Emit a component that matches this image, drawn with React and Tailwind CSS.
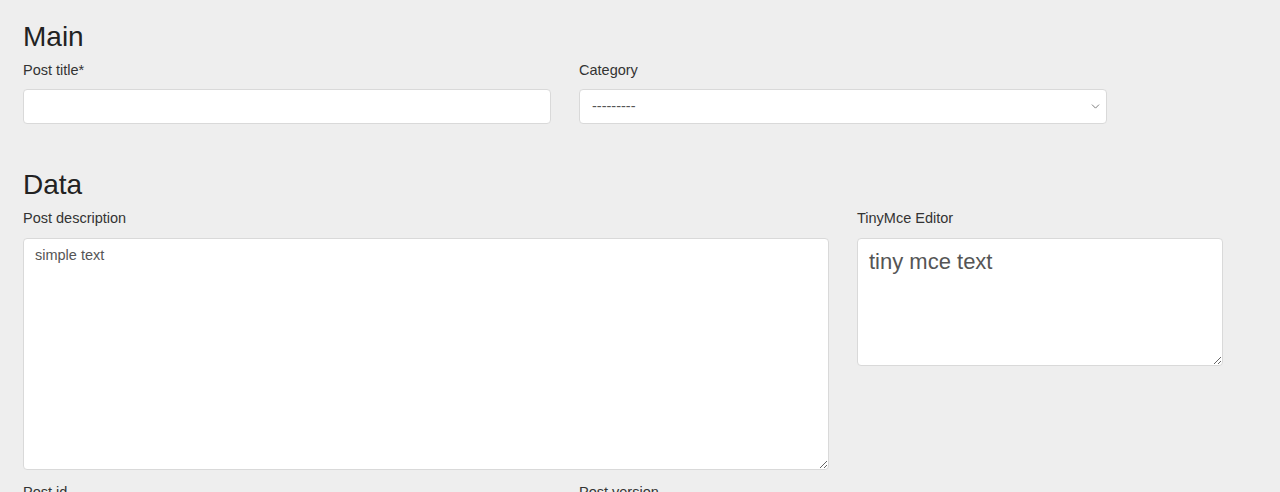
import React from "react";
import { ChevronDown } from "lucide-react";

const labelCls = "block text-[14.5px] leading-[1.5] text-[#333] mb-2";
const fieldCls =
    "block w-full bg-white border border-[#d9d9d9] rounded-[4px] px-3 text-[14.5px] leading-[1.5] text-[#555] outline-none";

const App = () => {
    return (
        <div
            className="min-h-screen bg-[#eeeeee] pl-[23px] pt-5 pb-10"
            style={{ fontFamily: '"Liberation Sans", Arial, sans-serif' }}
        >
            <form>
                {/* Main */}
                <h3 className="text-[28px] leading-[1.2] text-[#222] mb-[6px]">Main</h3>
                <div className="flex gap-[28px]">
                    <div className="w-[528px]">
                        <label className={labelCls}>Post title*</label>
                        <input type="text" className={fieldCls + " h-[35px]"} />
                    </div>
                    <div className="w-[528px]">
                        <label className={labelCls}>Category</label>
                        <div className="relative">
                            <select className={fieldCls + " h-[35px] appearance-none"} defaultValue="">
                                <option value="">---------</option>
                            </select>
                            <ChevronDown
                                size={13}
                                strokeWidth={1.75}
                                className="absolute right-[5px] top-[11px] text-[#777] pointer-events-none"
                            />
                        </div>
                    </div>
                </div>

                {/* Data */}
                <h3 className="text-[28px] leading-[1.2] text-[#222] mt-[44px] mb-[6px]">Data</h3>
                <div className="flex gap-[28px] items-start">
                    <div className="w-[806px]">
                        <label className={labelCls}>Post description</label>
                        <textarea
                            className={fieldCls + " h-[232px] pt-[6px] pl-[11px]"}
                            defaultValue="simple text"
                        />
                    </div>
                    <div className="w-[366px]">
                        <label className={labelCls}>TinyMce Editor</label>
                        <textarea
                            className={fieldCls + " h-[128px] pt-[6px] pl-[11px] text-[22px] leading-[1.5]"}
                            defaultValue="tiny mce text"
                        />
                    </div>
                </div>

                <div className="flex gap-[28px] mt-[12px]">
                    <div className="w-[528px]">
                        <label className={labelCls}>Post id</label>
                        <input type="text" className={fieldCls + " h-[35px]"} />
                    </div>
                    <div className="w-[528px]">
                        <label className={labelCls}>Post version</label>
                        <input type="text" className={fieldCls + " h-[35px]"} />
                    </div>
                </div>
            </form>
        </div>
    );
};

export default App;
